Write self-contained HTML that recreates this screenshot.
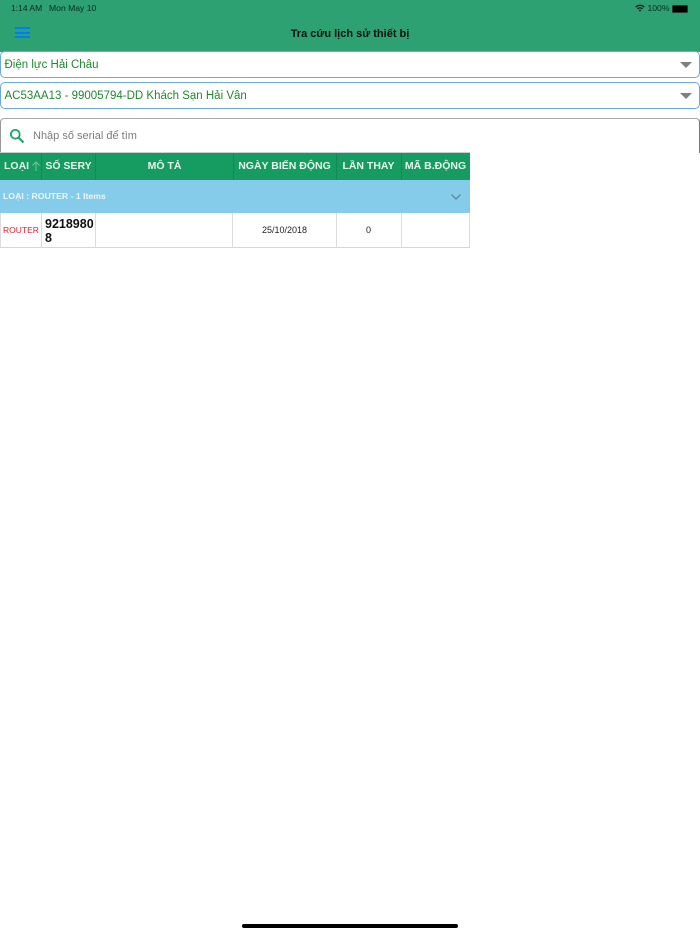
<!DOCTYPE html>
<html><head><meta charset="utf-8">
<style>
html,body{margin:0;padding:0;width:700px;height:934px;background:#fff;overflow:hidden;font-family:"Liberation Sans","Noto Sans CJK SC",sans-serif}
.a{position:absolute;white-space:nowrap}
.sel{position:absolute;left:0;width:698px;height:25px;border:1px solid #6aa9e4;border-radius:5px;background:#fff;color:#1d8a2c;font-size:11.5px;line-height:27px;}
.sel span{position:absolute;left:3.5px;top:0}
.tri{position:absolute;left:680px;width:0;height:0;border-left:6px solid transparent;border-right:6px solid transparent;border-top:6px solid #7f7f7f}
.th{position:absolute;top:153px;height:27px;line-height:26px;color:#e8f5ec;font-size:10.5px;font-weight:bold;text-align:center;white-space:nowrap;background:#169b60;}
.v{position:absolute;width:1px;background:#dcdcdc}
</style></head><body>
<div class="a" style="left:0;top:0;width:700px;height:52px;background:#2da172"></div>
<div class="a" style="left:11px;top:3px;font-size:8.5px;color:#0b2a1c;line-height:11px">1:14 AM</div>
<div class="a" style="left:49px;top:3px;font-size:8.6px;color:#0b2a1c;line-height:11px">Mon May 10</div>
<svg class="a" style="left:635px;top:4px" width="10" height="8" viewBox="0 0 10 8"><path d="M0.3 2.6C3 0 7 0 9.7 2.6L8.8 3.6C6.5 1.5 3.5 1.5 1.2 3.6ZM2 4.4C3.8 2.8 6.2 2.8 8 4.4L7.1 5.3C5.8 4.2 4.2 4.2 2.9 5.3ZM3.7 6.1C4.5 5.5 5.5 5.5 6.3 6.1L5 7.6Z" fill="#0b1f16"/></svg>
<div class="a" style="left:647.5px;top:3px;font-size:8.6px;color:#0b2a1c;line-height:11px">100%</div>
<div class="a" style="left:672px;top:5px;width:14px;height:6px;background:#000;border-radius:1.5px;border:0.5px solid #1d3a2c"></div>
<div class="a" style="left:687px;top:7px;width:1px;height:3px;background:#1d3a2c"></div>
<div class="a" style="left:14.5px;top:27px;width:15px;height:2px;background:#007aff"></div>
<div class="a" style="left:14.5px;top:31.5px;width:15px;height:2px;background:#007aff"></div>
<div class="a" style="left:14.5px;top:36px;width:15px;height:2px;background:#007aff"></div>
<div class="a" style="left:0;width:700px;top:34px;text-align:center;font-size:11px;font-weight:bold;color:#06120c;line-height:0"><span style="position:relative;top:0">Tra cứu lịch sử thiết bị</span></div>

<div class="sel" style="top:51px"><span>Điện lực Hải Châu</span></div>
<div class="tri" style="top:61.5px"></div>
<div class="sel" style="top:82px"><span>AC53AA13 - 99005794-DD Khách Sạn Hải Vân</span></div>
<div class="tri" style="top:93px"></div>

<div class="a" style="left:0;top:118px;width:700px;height:35px;overflow:hidden"><div style="position:absolute;left:0;top:0;width:698px;height:50px;border:1px solid #a8a8a8;border-right-color:#777;border-left-color:#999;border-radius:4px;background:#fff"></div></div>
<svg class="a" style="left:9px;top:128px" width="16" height="16" viewBox="0 0 16 16"><circle cx="6.3" cy="6.3" r="4.4" fill="none" stroke="#1ea568" stroke-width="1.8"/><path d="M9.6 9.6L14.5 14.5" stroke="#1ea568" stroke-width="2.2"/></svg>
<div class="a" style="left:33px;top:129px;font-size:11px;line-height:14px;color:#7c7c7c">Nhập số serial để tìm</div>

<div class="th" style="left:0;width:41px"></div>
<div class="a" style="left:4px;top:153px;line-height:26px;font-size:10.5px;font-weight:bold;color:#e8f5ec;z-index:2">LOẠI</div>
<svg class="a" style="left:30.5px;top:161px;z-index:2" width="10" height="11" viewBox="0 0 10 11"><path d="M5 10V1M1.5 4.5L5 1L8.5 4.5" fill="none" stroke="#7fbf9f" stroke-width="1"/></svg>
<div class="th" style="left:41px;width:55px">SỐ SERY</div>
<div class="th" style="left:96px;width:137px">MÔ TẢ</div>
<div class="th" style="left:233px;width:103px">NGÀY BIẾN ĐỘNG</div>
<div class="th" style="left:336px;width:65px">LẦN THAY</div>
<div class="th" style="left:401px;width:69px">MÃ B.ĐỘNG</div>
<div class="a" style="left:0;top:152px;width:470px;height:1px;background:#cfcfcf"></div>
<div class="v" style="left:41px;top:153px;height:27px;background:#138a55"></div>
<div class="v" style="left:95px;top:153px;height:27px;background:#138a55"></div>
<div class="v" style="left:233px;top:153px;height:27px;background:#138a55"></div>
<div class="v" style="left:336px;top:153px;height:27px;background:#138a55"></div>
<div class="v" style="left:401px;top:153px;height:27px;background:#138a55"></div>

<div class="a" style="left:0;top:180px;width:470px;height:33px;background:#85cceb"></div>
<div class="a" style="left:3px;top:191px;font-size:8.7px;font-weight:bold;line-height:11px;color:#eaf6fb">LOẠI : ROUTER - 1 Items</div>
<svg class="a" style="left:450px;top:193px" width="12" height="8" viewBox="0 0 12 8"><path d="M1.5 1.5L6 6L10.5 1.5" fill="none" stroke="#5e7d8c" stroke-width="1.2"/></svg>

<div class="a" style="left:0;top:247px;width:470px;height:1px;background:#d6d6d6"></div>
<div class="v" style="left:0;top:213px;height:35px"></div>
<div class="v" style="left:41px;top:213px;height:35px"></div>
<div class="v" style="left:95px;top:213px;height:35px"></div>
<div class="v" style="left:232px;top:213px;height:35px"></div>
<div class="v" style="left:336px;top:213px;height:35px"></div>
<div class="v" style="left:401px;top:213px;height:35px"></div>
<div class="v" style="left:469px;top:213px;height:35px"></div>
<div class="a" style="left:3px;top:225px;font-size:8.5px;line-height:11px;color:#f01a2a">ROUTER</div>
<div class="a" style="left:45px;top:217px;font-size:12.5px;font-weight:bold;line-height:14px;color:#111">9218980<br>8</div>
<div class="a" style="left:233px;width:103px;text-align:center;top:225px;font-size:9px;line-height:11px;color:#222">25/10/2018</div>
<div class="a" style="left:336px;width:65px;text-align:center;top:225px;font-size:9px;line-height:11px;color:#222">0</div>

<div class="a" style="left:242px;top:924px;width:216px;height:4px;border-radius:2px;background:#000"></div>
</body></html>
